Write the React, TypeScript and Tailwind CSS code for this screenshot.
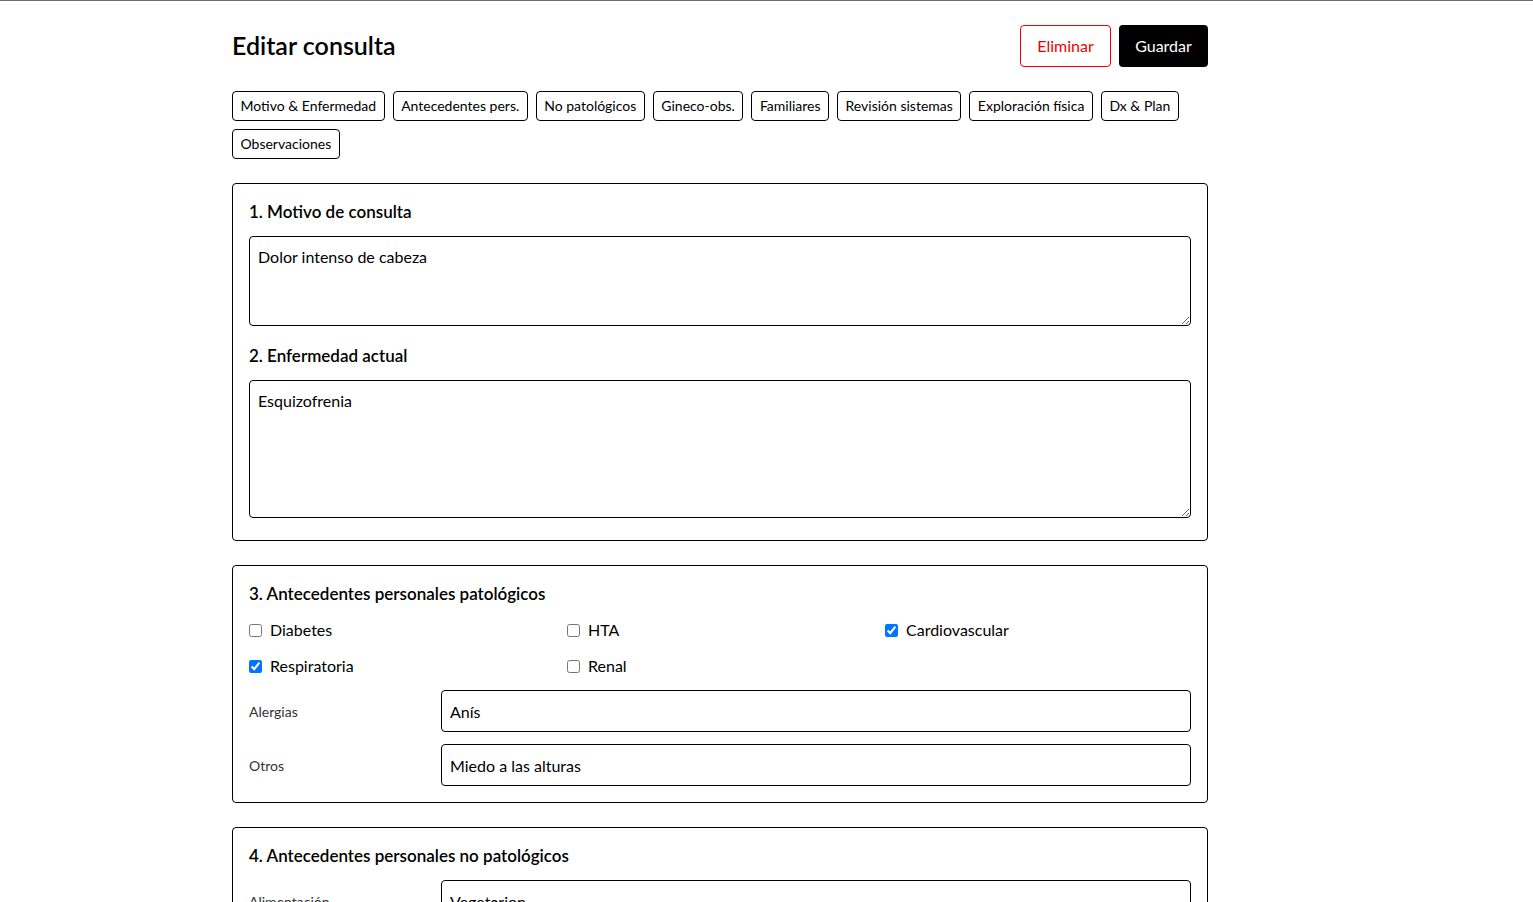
import { useState } from 'react';

const tabs = [
  'Motivo & Enfermedad',
  'Antecedentes pers.',
  'No patológicos',
  'Gineco-obs.',
  'Familiares',
  'Revisión sistemas',
  'Exploración física',
  'Dx & Plan',
  'Observaciones',
];

function Section({ title, children }: { title: string; children: React.ReactNode }) {
  return (
    <section className="mt-6 rounded border border-black p-4">
      <h2 className="mb-3 h-6 text-[17px] leading-6 font-semibold">{title}</h2>
      {children}
    </section>
  );
}

function Field({ label, value }: { label: string; value: string }) {
  return (
    <div className="grid grid-cols-[180px_1fr] items-center gap-3">
      <label className="text-[14px] text-[#333]">{label}</label>
      <input
        defaultValue={value}
        className="h-[42px] w-full rounded border border-black px-2 text-[16px] outline-none"
      />
    </div>
  );
}

export default function App() {
  const [checks, setChecks] = useState<Record<string, boolean>>({
    Diabetes: false,
    HTA: false,
    Cardiovascular: true,
    Respiratoria: true,
    Renal: false,
  });

  return (
    <div className="min-h-screen border-t border-[#6b6b6b] bg-white font-['Lato','Noto_Sans',sans-serif] text-black">
      <div className="ml-[232px] w-[976px] pt-6 pb-10">
        <div className="mb-6 flex items-center justify-between">
          <h1 className="text-[25px] font-semibold">Editar consulta</h1>
          <div className="flex gap-2">
            <button className="h-[42px] w-[91px] rounded border border-[#e00] text-[16px] text-[#e00]">
              Eliminar
            </button>
            <button className="h-[42px] w-[89px] rounded bg-black text-[16px] text-white">
              Guardar
            </button>
          </div>
        </div>

        <div className="flex flex-wrap gap-2">
          {tabs.map((t) => (
            <button
              key={t}
              className="h-[30px] rounded border border-black px-[7.5px] pb-px text-[14px]"
            >
              {t}
            </button>
          ))}
        </div>

        <Section title="1. Motivo de consulta">
          <textarea
            defaultValue="Dolor intenso de cabeza"
            className="block h-[90px] w-full rounded border border-black px-2 py-2 text-[16px] outline-none"
          />
          <h2 className="mt-[18px] mb-3 h-6 text-[17px] leading-6 font-semibold">2. Enfermedad actual</h2>
          <textarea
            defaultValue="Esquizofrenia"
            className="mb-[6px] block h-[138px] w-full rounded border border-black px-2 py-2 text-[16px] outline-none"
          />
        </Section>

        <Section title="3. Antecedentes personales patológicos">
          <div className="mb-3 grid grid-cols-3 gap-3">
            {Object.keys(checks).map((k) => (
              <label key={k} className="flex h-6 items-center gap-2 text-[16px]">
                <input
                  type="checkbox"
                  checked={checks[k]}
                  onChange={() => setChecks({ ...checks, [k]: !checks[k] })}
                  className="m-0 h-[13px] w-[13px]"
                />
                {k}
              </label>
            ))}
          </div>
          <div className="flex flex-col gap-3">
            <Field label="Alergias" value="Anís" />
            <Field label="Otros" value="Miedo a las alturas" />
          </div>
        </Section>

        <Section title="4. Antecedentes personales no patológicos">
          <div className="flex flex-col gap-3">
            <Field label="Alimentación" value="Vegetarion" />
            <Field label="Actividad física" value="" />
          </div>
        </Section>
      </div>
    </div>
  );
}
